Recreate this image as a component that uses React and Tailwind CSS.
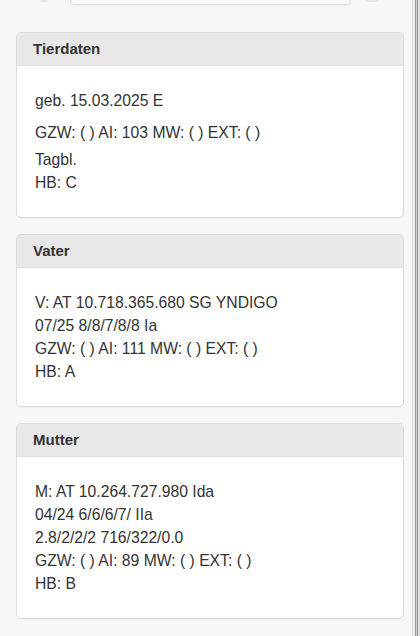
const cards = [
  {
    title: "Tierdaten",
    blocks: [
      { lines: ["geb. 15.03.2025 E"], gap: "mb-[9px]" },
      { lines: ["GZW: ( ) AI: 103 MW: ( ) EXT: ( )"], gap: "mb-[4px]" },
      { lines: ["Tagbl.", "HB: C"] },
    ],
  },
  {
    title: "Vater",
    blocks: [
      {
        lines: [
          "V: AT 10.718.365.680 SG YNDIGO",
          "07/25 8/8/7/8/8 Ia",
          "GZW: ( ) AI: 111 MW: ( ) EXT: ( )",
          "HB: A",
        ],
      },
    ],
  },
  {
    title: "Mutter",
    blocks: [
      {
        lines: [
          "M: AT 10.264.727.980 Ida",
          "04/24 6/6/6/7/ IIa",
          "2.8/2/2/2 716/322/0.0",
          "GZW: ( ) AI: 89 MW: ( ) EXT: ( )",
          "HB: B",
        ],
      },
    ],
  },
];

const Panel = ({ title, blocks }) => (
  <div className="bg-white rounded-[5px] border border-[#dcdcdc] shadow-[0_1px_1px_rgba(0,0,0,0.04)] overflow-hidden">
    <div className="h-[33px] flex items-center px-4 bg-[#e8e8e8] border-b border-[#e0e0e0]">
      <span className="text-[15px] font-bold text-[#333]">{title}</span>
    </div>
    <div className="pl-[18px] pr-4 py-[23px] text-[15.7px] leading-[23px] text-[#333]">
      {blocks.map((b, i) => (
        <div key={i} className={b.gap || ""}>
          {b.lines.map((l) => (
            <div key={l}>{l}</div>
          ))}
        </div>
      ))}
    </div>
  </div>
);

export default function App() {
  return (
    <div
      className="w-[420px] h-[636px] flex bg-[#f7f7f7] overflow-hidden"
      style={{ fontFamily: '"Liberation Sans", Arial, sans-serif' }}
    >
      <div className="flex-1 pl-4 pr-2">
        {/* toolbar, scrolled mostly out of view */}
        <div className="h-[5px] flex items-start">
          <div className="ml-[24px] w-[8px] h-[2px] rounded-b-full bg-[#e6e6e6]"></div>
          <div className="ml-[22px] w-[281px] h-[5px] rounded-b-[4px] border border-t-0 border-[#dedede] bg-[#f9f9f9] shadow-[0_1px_2px_rgba(0,0,0,0.06)]"></div>
          <div className="ml-[14px] w-[14px] h-[2px] rounded-b-full bg-[#e6e6e6]"></div>
        </div>
        <div className="pt-[27px] flex flex-col gap-4">
          {cards.map((c) => (
            <Panel key={c.title} {...c} />
          ))}
        </div>
      </div>
      {/* window edge */}
      <div className="w-2 flex">
        <div className="w-px bg-[#dadada]"></div>
        <div className="w-[2px] bg-[#efefef]"></div>
        <div className="w-px bg-[#9c9c9c]"></div>
        <div className="w-px bg-[#d4d4d4]"></div>
        <div className="w-px bg-[#8e8e8e]"></div>
        <div className="w-[2px] bg-[#e4e4e4]"></div>
      </div>
    </div>
  );
}
